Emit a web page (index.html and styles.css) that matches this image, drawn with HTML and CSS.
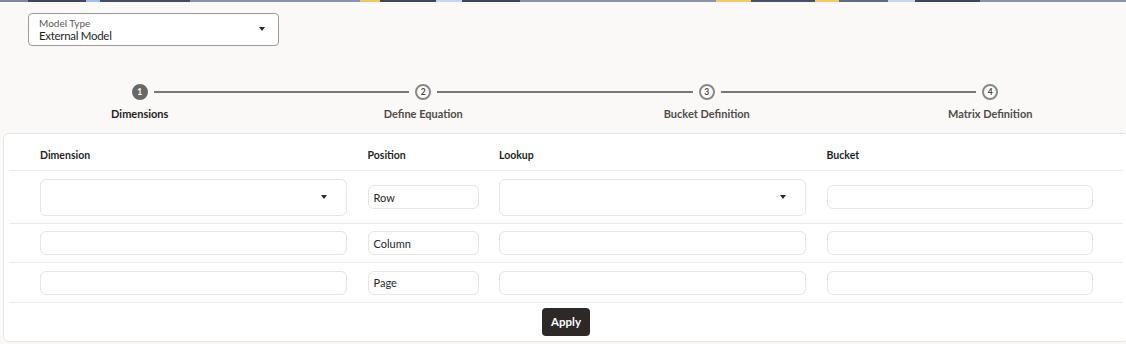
FILE: index.html
```html
<!DOCTYPE html>
<html lang="en">
<head>
<meta charset="utf-8">
<title>Model Definition</title>
<link rel="stylesheet" href="styles.css">
</head>
<body>
<div class="topbar"></div>

<div class="model-field">
  <div class="field-text">
    <span class="field-label">Model Type</span>
    <span class="field-value">External Model</span>
  </div>
  <span class="caret"></span>
</div>

<ol class="stepper">
  <li class="step step-first step-active">
    <div class="track"><span class="seg"></span><span class="dot">1</span><span class="seg"></span></div>
    <div class="step-label">Dimensions</div>
  </li>
  <li class="step">
    <div class="track"><span class="seg"></span><span class="dot">2</span><span class="seg"></span></div>
    <div class="step-label">Define Equation</div>
  </li>
  <li class="step">
    <div class="track"><span class="seg"></span><span class="dot">3</span><span class="seg"></span></div>
    <div class="step-label">Bucket Definition</div>
  </li>
  <li class="step step-last">
    <div class="track"><span class="seg"></span><span class="dot">4</span><span class="seg"></span></div>
    <div class="step-label">Matrix Definition</div>
  </li>
</ol>

<section class="card">
  <div class="row row-head">
    <div class="th">Dimension</div>
    <div class="th">Position</div>
    <div class="th">Lookup</div>
    <div class="th">Bucket</div>
  </div>
  <div class="row row-1">
    <div class="select"><span class="caret"></span></div>
    <div class="input">Row</div>
    <div class="select"><span class="caret"></span></div>
    <div class="input"></div>
  </div>
  <div class="row row-2">
    <div class="input"></div>
    <div class="input">Column</div>
    <div class="input"></div>
    <div class="input"></div>
  </div>
  <div class="row row-3">
    <div class="input"></div>
    <div class="input">Page</div>
    <div class="input"></div>
    <div class="input"></div>
  </div>
  <div class="footer">
    <button class="btn-apply" type="button">Apply</button>
  </div>
</section>
</body>
</html>
```

FILE: styles.css
```css
html, body {
  margin: 0;
  padding: 0;
  overflow: hidden;
  height: 344px;
}

body {
  background: #faf9f7;
  font-family: Lato, "Open Sans", Arial, sans-serif;
  color: #2b2b2b;
}

.topbar {
  height: 2px;
  background: linear-gradient(90deg,
    #7d88a6 0, #7d88a6 28px,
    #3c4660 28px, #3c4660 86px,
    #9ec0f0 86px, #9ec0f0 100px,
    #434d68 100px, #434d68 190px,
    #8891ad 190px, #8891ad 360px,
    #f3c766 360px, #f3c766 380px,
    #3d4761 380px, #3d4761 436px,
    #c6d5f2 436px, #c6d5f2 462px,
    #3c4660 462px, #3c4660 520px,
    #8a93ad 520px, #8a93ad 716px,
    #f5cb6a 716px, #f5cb6a 751px,
    #46506a 751px, #46506a 815px,
    #f5cb6a 815px, #f5cb6a 839px,
    #5f6a86 839px, #5f6a86 888px,
    #c6d5f2 888px, #c6d5f2 915px,
    #3c4660 915px, #3c4660 980px,
    #8a93ad 980px, #8a93ad 1126px);
}

/* Model type select */
.model-field {
  box-sizing: border-box;
  width: 251px;
  height: 33px;
  margin: 11px 0 0 28px;
  border: 1px solid #9c9a97;
  border-radius: 4px;
  background: #fff;
  display: flex;
  align-items: center;
  justify-content: space-between;
  padding: 0 13px 0 10px;
}

.field-text {
  display: flex;
  flex-direction: column;
  padding-top: 1px;
}

.field-label {
  font-size: 10px;
  line-height: 12px;
  color: #5b5956;
}

.field-value {
  font-size: 11.5px;
  line-height: 14px;
  letter-spacing: -0.3px;
  color: #1f1f1f;
}

.caret {
  width: 0;
  height: 0;
  border-left: 3.5px solid transparent;
  border-right: 3.5px solid transparent;
  border-top: 4px solid #2a2a2a;
}

.model-field .caret {
  margin-top: -2px;
}

/* Stepper */
.stepper {
  list-style: none;
  margin: 38px 0 0 -2px;
  padding: 0;
  width: 1134px;
  display: grid;
  grid-template-columns: repeat(4, 1fr);
}

.track {
  display: flex;
  align-items: center;
  height: 16px;
}

.seg {
  flex: 1;
  height: 2px;
  background: #7a7874;
}

.seg:first-child { margin-right: 6px; }
.seg:last-child { margin-left: 6px; }

.step-first .seg:first-child,
.step-last .seg:last-child {
  visibility: hidden;
}

.dot {
  box-sizing: border-box;
  width: 16px;
  height: 16px;
  border-radius: 50%;
  border: 2px solid #8a8884;
  background: #fff;
  color: #4a4845;
  font-size: 8.5px;
  font-weight: 700;
  display: flex;
  align-items: center;
  justify-content: center;
}

.step-active .dot {
  background: #6b6864;
  border-color: #6b6864;
  color: #fff;
}

.step-label {
  margin-top: 7px;
  text-align: center;
  font-size: 11px;
  line-height: 14px;
  font-weight: 700;
  color: #4f4c49;
}

.step-active .step-label {
  color: #1d1d1d;
}

/* Card */
.card {
  box-sizing: border-box;
  width: 1126px;
  height: 209px;
  margin: 12px 0 0 3px;
  background: #fff;
  border: 1px solid #e8e6e3;
  border-radius: 6px;
  padding: 0 5px;
}

.row {
  display: grid;
  grid-template-columns: 307px 111px 307px 266px;
  column-gap: 20.5px;
  align-items: center;
  padding-left: 31px;
  border-bottom: 1px solid #ecebea;
}

.row-head {
  height: 37px;
  padding-top: 5px;
  box-sizing: border-box;
}

.row-1 { height: 52px; }
.row-2 { height: 38px; }
.row-3 { height: 39px; }

.th {
  font-size: 10.5px;
  font-weight: 700;
  color: #1f1f1f;
}

.input,
.select {
  box-sizing: border-box;
  border: 1px solid #e6e5e3;
  border-radius: 6px;
  background: #fff;
}

.input {
  height: 24px;
  padding: 0 5px;
  display: flex;
  align-items: center;
  font-size: 11px;
  color: #262626;
}

.select {
  height: 37px;
  display: flex;
  align-items: center;
  justify-content: flex-end;
  padding-right: 19px;
}

.footer {
  height: 37px;
  display: flex;
  align-items: center;
  justify-content: center;
}

.btn-apply {
  width: 48px;
  height: 28px;
  border: none;
  border-radius: 4px;
  background: #2c2927;
  color: #fff;
  font-family: Lato, "Open Sans", Arial, sans-serif;
  font-size: 11.5px;
  font-weight: 700;
  padding: 0;
}
```
